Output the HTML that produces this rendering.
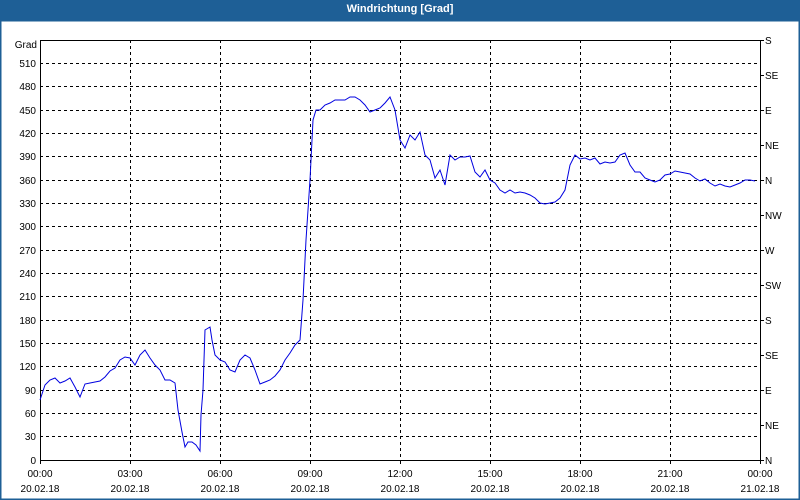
<!DOCTYPE html>
<html><head><meta charset="utf-8"><style>
body{margin:0;width:800px;height:500px;overflow:hidden;background:#fff;font-family:"Liberation Sans",sans-serif}
.t{position:absolute;left:0;top:0;width:800px;height:20px;background:#1e5f96;color:#fff;font-size:11px;font-weight:bold;text-align:center;line-height:19px}
</style></head><body>
<div class="t">Windrichtung [Grad]</div>
<svg width="800" height="500" style="position:absolute;left:0;top:0" font-family="'Liberation Sans',sans-serif" font-size="10">
<rect x="0" y="20" width="800" height="480" fill="none" stroke="#1e5f96" stroke-width="3"/>
<g stroke="#000" stroke-dasharray="3,3" stroke-width="1">
<path d="M40 63.5H760M40 86.5H760M40 110.5H760M40 133.5H760M40 156.5H760M40 180.5H760M40 203.5H760M40 226.5H760M40 250.5H760M40 273.5H760M40 296.5H760M40 320.5H760M40 343.5H760M40 366.5H760M40 390.5H760M40 413.5H760M40 436.5H760"/>
<path d="M130.5 40V460M220.5 40V460M310.5 40V460M400.5 40V460M490.5 40V460M580.5 40V460M670.5 40V460"/>
</g>
<rect x="40.5" y="40.5" width="720" height="420" fill="none" stroke="#000"/>
<g stroke="#000"><path d="M40.5 460V464M130.5 460V464M220.5 460V464M310.5 460V464M400.5 460V464M490.5 460V464M580.5 460V464M670.5 460V464M760.5 460V464"/>
<path d="M760 40.5H764M760 75.5H764M760 110.5H764M760 145.5H764M760 180.5H764M760 215.5H764M760 250.5H764M760 285.5H764M760 320.5H764M760 355.5H764M760 390.5H764M760 425.5H764M760 460.5H764"/></g>
<g text-anchor="end"><text x="37" y="48">Grad</text><text x="36" y="67">510</text><text x="36" y="90">480</text><text x="36" y="114">450</text><text x="36" y="137">420</text><text x="36" y="160">390</text><text x="36" y="184">360</text><text x="36" y="207">330</text><text x="36" y="230">300</text><text x="36" y="254">270</text><text x="36" y="277">240</text><text x="36" y="300">210</text><text x="36" y="324">180</text><text x="36" y="347">150</text><text x="36" y="370">120</text><text x="36" y="394">90</text><text x="36" y="417">60</text><text x="36" y="440">30</text><text x="36" y="464">0</text></g>
<g><text x="765" y="44">S</text><text x="765" y="79">SE</text><text x="765" y="114">E</text><text x="765" y="149">NE</text><text x="765" y="184">N</text><text x="765" y="219">NW</text><text x="765" y="254">W</text><text x="765" y="289">SW</text><text x="765" y="324">S</text><text x="765" y="359">SE</text><text x="765" y="394">E</text><text x="765" y="429">NE</text><text x="765" y="464">N</text></g>
<g text-anchor="middle"><text x="40" y="477">00:00</text><text x="130" y="477">03:00</text><text x="220" y="477">06:00</text><text x="310" y="477">09:00</text><text x="400" y="477">12:00</text><text x="490" y="477">15:00</text><text x="580" y="477">18:00</text><text x="670" y="477">21:00</text><text x="760" y="477">00:00</text>
<text x="40" y="492">20.02.18</text><text x="130" y="492">20.02.18</text><text x="220" y="492">20.02.18</text><text x="310" y="492">20.02.18</text><text x="400" y="492">20.02.18</text><text x="490" y="492">20.02.18</text><text x="580" y="492">20.02.18</text><text x="670" y="492">20.02.18</text><text x="760" y="492">21.02.18</text></g>
<polyline fill="none" stroke="#0000e0" stroke-width="1" points="40,400 45,385 50,380 55,378 60,383 65,381 70,378 75,387 80,397 85,384 90,383 95,382 100,381 105,377 110,371 115,368 120,360 125,357 130,358 135,365 140,355 145,350 150,358 155,365 160,370 165,380 170,380 175,383 178,410 182,432 185,447 188,442 192,442 196,445 200,451 201,415 203,390 205,330 210,327 212,340 215,355 220,360 225,362 230,370 235,372 240,360 245,355 250,358 255,370 260,384 265,382 270,380 275,376 280,370 285,360 290,353 295,345 300,340 303,300 306,240 310,180 313,120 316,110 320,110 325,105 330,103 335,100 340,100 345,100 350,97 355,97 360,100 365,105 370,112 375,110 380,108 385,103 390,97 395,110 400,140 405,148 410,135 415,140 420,132 425,155 430,160 435,178 440,170 445,185 450,155 455,160 460,157 465,157 470,156 475,172 480,177 485,170 490,180 495,183 500,190 505,193 510,190 515,193 520,192 525,193 530,195 535,198 540,203 545,204 550,203 555,202 560,198 565,190 570,165 575,155 580,159 585,158 590,160 595,158 600,164 605,162 610,163 615,162 620,155 625,153 630,165 635,172 640,172 645,178 650,180 655,182 660,180 665,175 670,174 675,171 680,172 685,173 690,174 695,178 700,181 705,179 710,183 715,186 720,184 725,186 730,187 735,185 740,183 745,180 750,180 755,181"/>
</svg>
</body></html>
